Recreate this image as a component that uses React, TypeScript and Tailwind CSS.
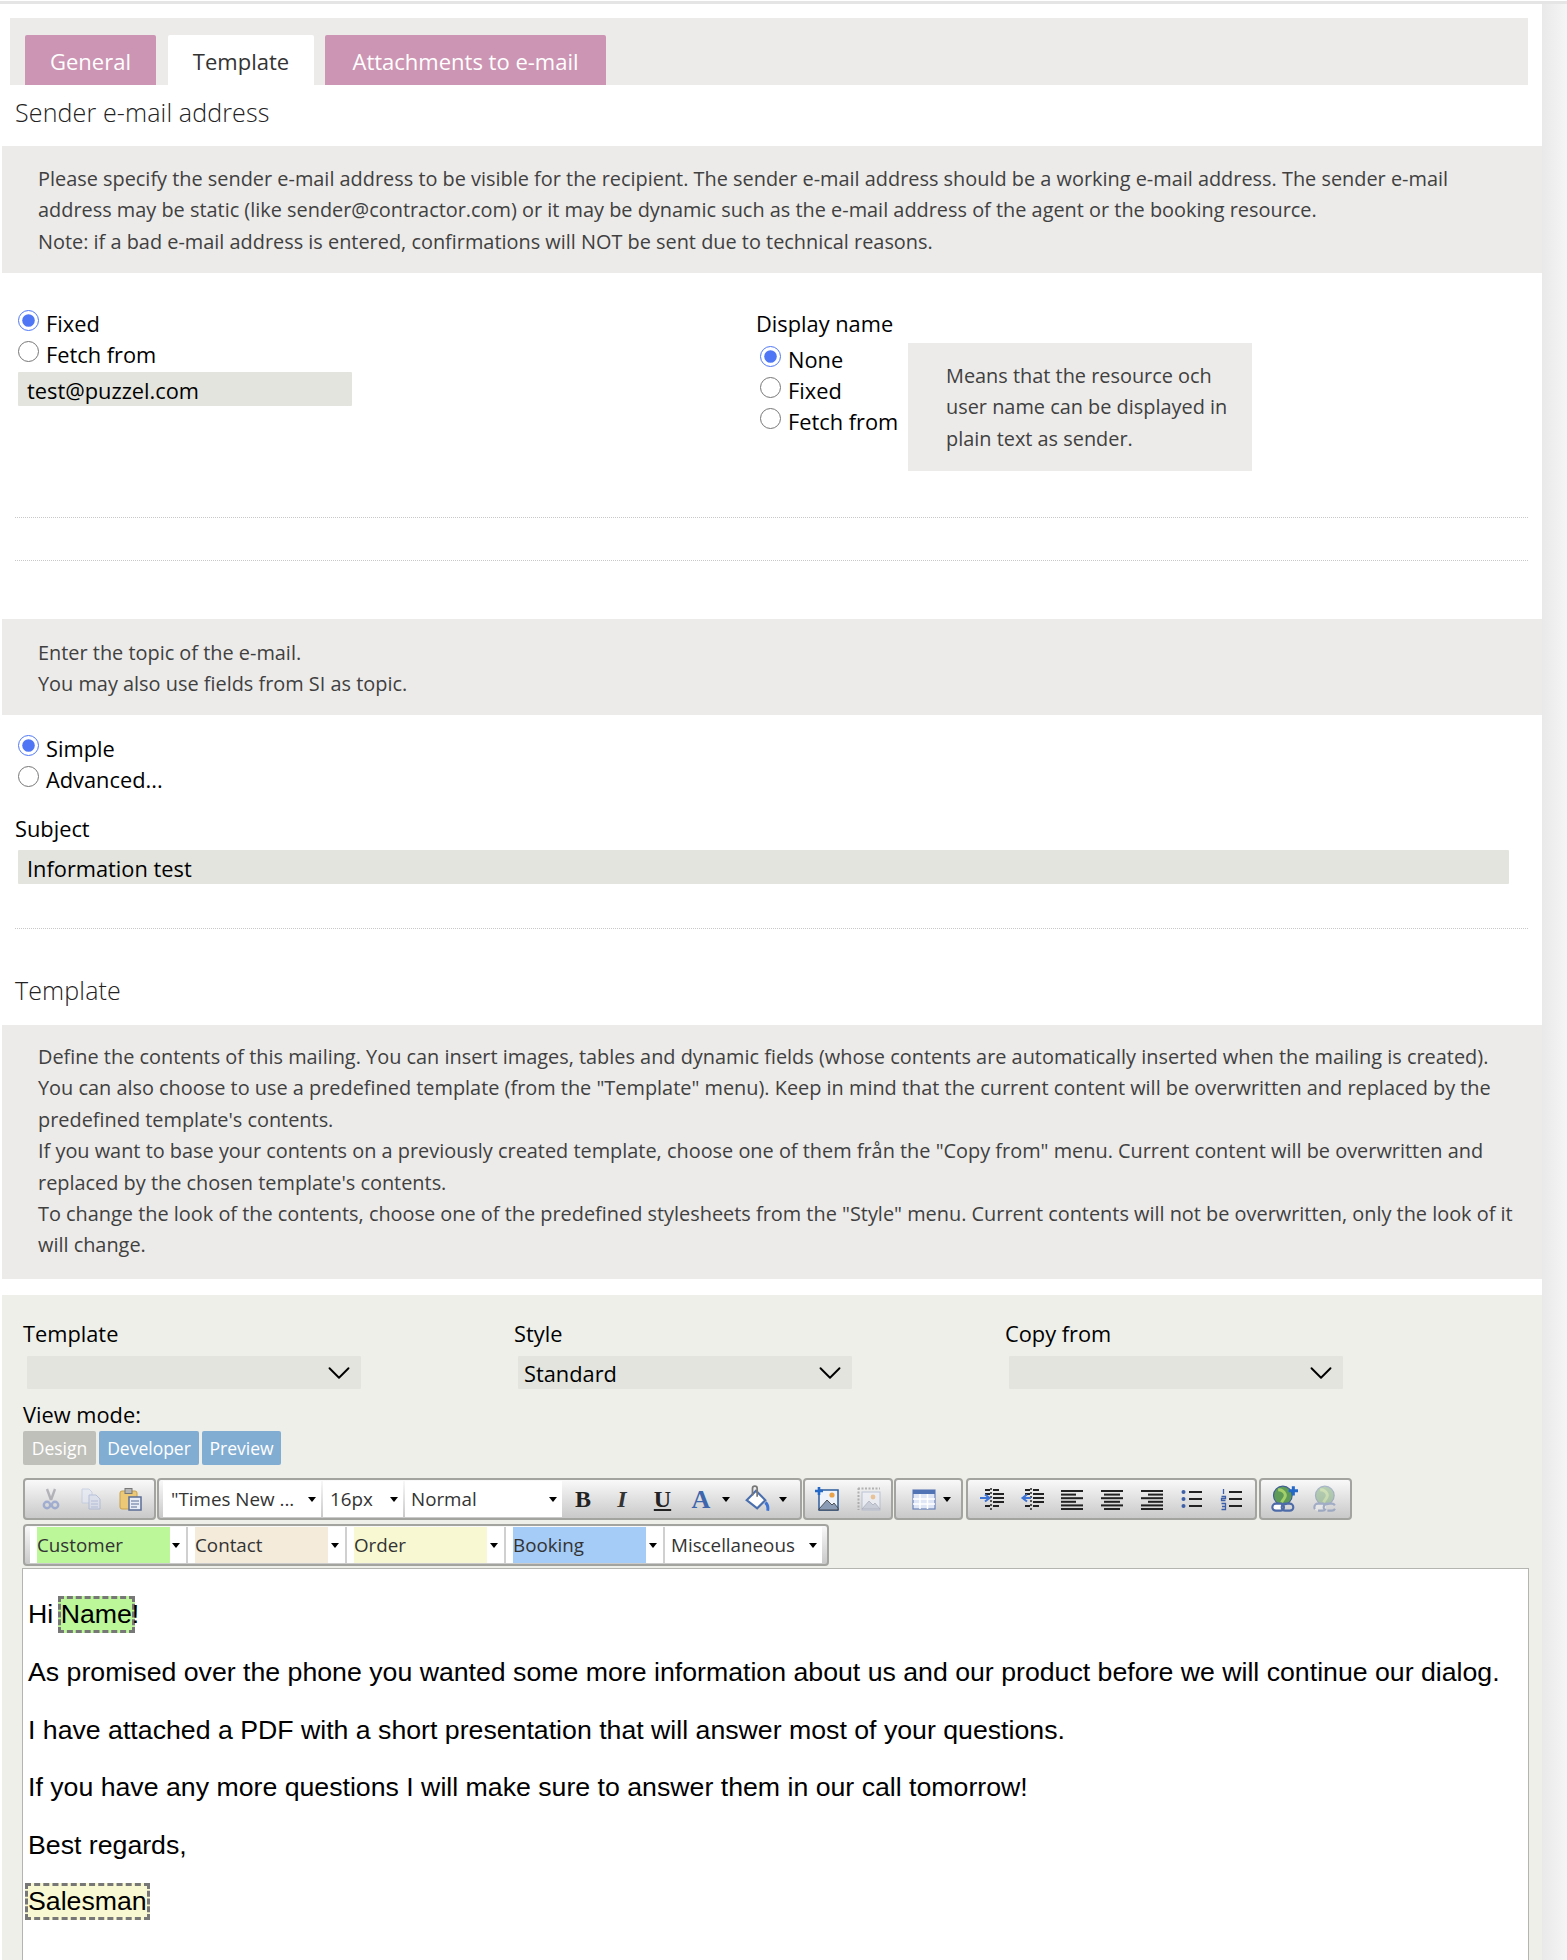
import React from 'react';
import { ChevronDown } from 'lucide-react';

const UI_FONT = "font-['Open_Sans','Noto_Sans',sans-serif]";

const InfoBox = ({ lines, className }: { lines: string[]; className: string }) => (
  <div className={`bg-[#ecebe9] text-[#404040] text-[19.9px] leading-[31.4px] ${className}`}>
    {lines.map((l, i) => (
      <div key={i} className="whitespace-nowrap">{l}</div>
    ))}
  </div>
);

const Radio = ({ label, checked, name }: { label: string; checked?: boolean; name: string }) => (
  <label className="flex items-center h-[31px] text-[21.8px] text-black">
    <input type="radio" name={name} defaultChecked={checked} className="m-0 w-[21px] h-[21px] accent-[#4f77f5] -translate-y-[2px]" />
    <span className="ml-[7px] translate-y-[1.5px]">{label}</span>
  </label>
);

const FakeSelect = ({ value }: { value?: string }) => (
  <div className="w-[334px] h-[33px] ml-[4px] bg-[#e3e4dd] flex items-center justify-between pl-[6px] pr-[3px] text-[21.8px] text-black rounded-[1px]">
    <span className="pt-[2px]">{value}</span>
    <ChevronDown className="w-[38px] h-[38px] -my-[3px]" strokeWidth={1.2} />
  </div>
);

const Caret = () => <span className="w-0 h-0 border-x-[4px] border-x-transparent border-t-[5px] border-t-black" />;

const ToolGroup = ({ className, children }: { className: string; children: React.ReactNode }) => (
  <div className={`h-[42px] shrink-0 flex items-center rounded-[4px] border-2 border-[#a3a3a0] bg-gradient-to-b from-[#f9f9f9] to-[#c9c9c9] ${className}`}>
    {children}
  </div>
);

const ToolSelect = ({ label, width }: { label: string; width: string }) => (
  <div className={`h-[36px] bg-white flex items-center justify-between text-[18.8px] text-[#333] shrink-0 ${width}`}>
    {label}
    <span className="mr-[5px] flex"><Caret /></span>
  </div>
);

const FieldSelect = ({ label, bg, width }: { label: string; bg: string; width: string }) => (
  <div className={`h-[36px] bg-white flex items-center text-[18.8px] text-[#333] shrink-0 border-r-2 border-[#d0d0d0] pl-[7px] pr-[4px] justify-between ${width}`}>
    <span className={`w-[133px] h-full flex items-center ${bg}`}>{label}</span>
    <span className="mr-[2px] flex"><Caret /></span>
  </div>
);

const Icon = ({ children, className = '' }: { children: React.ReactNode; className?: string }) => (
  <svg viewBox="0 0 24 24" className={`w-[24px] h-[24px] shrink-0 ${className}`}>{children}</svg>
);

const CutIcon = () => (
  <Icon className="opacity-60">
    <path d="M8 2l4 11M16 2l-4 11" stroke="#8f8f9a" strokeWidth="2.4" fill="none" />
    <circle cx="8" cy="18" r="3.2" fill="none" stroke="#7b8fca" strokeWidth="2.4" />
    <circle cx="16" cy="18" r="3.2" fill="none" stroke="#7b8fca" strokeWidth="2.4" />
  </Icon>
);
const CopyIcon = () => (
  <Icon className="opacity-60">
    <path d="M3 2h7l3 3v11H3z" fill="#e4e9f5" stroke="#b6c2e0" />
    <path d="M10 8h7l4 4v10H10z" fill="#d8dff0" stroke="#9aa9d2" />
    <path d="M12 14h7M12 17h7M12 20h7" stroke="#9aa9d2" />
  </Icon>
);
const PasteIcon = () => (
  <Icon>
    <rect x="2" y="4" width="17" height="18" rx="2" fill="#edc977" stroke="#c9a14f" />
    <rect x="7" y="1.5" width="7" height="5" fill="#b5b5b5" stroke="#777" />
    <rect x="11" y="10" width="12" height="13" fill="#e8ecf7" stroke="#5b6c96" strokeWidth="1.5" />
    <path d="M13 14h8M13 17h8M13 20h6" stroke="#5b6c96" />
  </Icon>
);
const ImageAddIcon = () => (
  <Icon>
    <rect x="4" y="3" width="19" height="20" fill="#eef3fb" stroke="#2c5d9c" strokeWidth="1.5" />
    <path d="M4 22l8-9 5 5 2-2 4 5v2H4z" fill="#8a9bb5" stroke="#333" strokeWidth="0.8" />
    <circle cx="17" cy="8" r="2.6" fill="#e8a24a" />
    <path d="M4 0v8M0 4h8" stroke="#2468c8" strokeWidth="2.6" />
  </Icon>
);
const ImageIcon = () => (
  <Icon className="opacity-70">
    <path d="M1.5 1v22M1 1.500h22" stroke="#999" strokeWidth="2" strokeDasharray="2 1.500" />
    <rect x="5" y="5" width="18" height="18" fill="#eef1f8" stroke="#aab4cc" />
    <path d="M5 22l7-8 4 4 2-2 5 6z" fill="#c2c9d8" stroke="#98a0b0" strokeWidth="0.8" />
    <circle cx="16" cy="10" r="2.4" fill="#eab57a" />
  </Icon>
);
const TableIcon = () => (
  <Icon>
    <rect x="1" y="3" width="22" height="19" fill="#dfe6f5" stroke="#6a82b8" strokeWidth="1.200" />
    <rect x="1" y="3" width="22" height="4" fill="#4f73b5" />
    <path d="M1 12h22M1 17h22M8 7v15M15.500 7v15" stroke="#fff" strokeWidth="1.500" />
  </Icon>
);
const AlignIcon = ({ rows }: { rows: [number, number][] }) => (
  <Icon>
    {rows.map(([x, w], i) => (
      <rect key={i} x={x} y={3 + i * 3.6} width={w} height="2" fill="#222" />
    ))}
  </Icon>
);
const IndentIcon = ({ flip }: { flip?: boolean }) => (
  <Icon>
    <path d="M11 1v22" stroke="#333" strokeWidth="1.600" strokeDasharray="2 2" />
    <path d="M5 3h5M13 3h6M5 7h5M13 7h11M13 11h11M13 15h11M5 19h5M13 19h6" stroke="#222" strokeWidth="2" />
    {flip ? (
      <path d="M11 11H4M7 7.500L2.500 11 7 14.500" stroke="#3d74d6" strokeWidth="2" fill="none" />
    ) : (
      <path d="M0 11h8M5 7.500L9.500 11 5 14.500" stroke="#3d74d6" strokeWidth="2" fill="none" />
    )}
  </Icon>
);
const BulletIcon = () => (
  <Icon>
    <path d="M9 5h13M9 12h13M9 19h13" stroke="#222" strokeWidth="2" />
    <circle cx="3.500" cy="5" r="2" fill="#3d5fa8" />
    <circle cx="3.500" cy="12" r="2" fill="#3d5fa8" />
    <circle cx="3.500" cy="19" r="2" fill="#3d5fa8" />
  </Icon>
);
const NumberIcon = () => (
  <Icon>
    <path d="M9 5h13M9 12h13M9 19h13" stroke="#222" strokeWidth="2" />
    <path d="M3.500 2v5M1.500 9.500h4v2h-4v2h4M1.500 16.500h4v6h-4M2 19.500h3" stroke="#3d5fa8" strokeWidth="1.300" fill="none" />
  </Icon>
);
const LinkIcon = ({ off }: { off?: boolean }) => (
  <Icon className={`w-[28px] h-[28px] ${off ? 'opacity-40' : ''}`}>
    <circle cx="11" cy="9" r="8" fill="#5f9b58" stroke="#3f5f8f" />
    <path d="M7 4c3 0 5 1 6 4s-2 4-3 7" fill="none" stroke="#a4d06a" strokeWidth="2.500" />
    <rect x="2" y="16" width="10" height="6" rx="3" fill="#fff" stroke="#4d6ba8" strokeWidth="1.800" strokeDasharray={off ? '7 3' : undefined} />
    <rect x="10" y="16" width="10" height="6" rx="3" fill="none" stroke="#4d6ba8" strokeWidth="1.800" strokeDasharray={off ? '7 3' : undefined} />
    {!off && <path d="M20 1v8M16 5h8" stroke="#2468c8" strokeWidth="2.600" />}
  </Icon>
);

const Field = ({ bg, children, className = '' }: { bg?: string; children: React.ReactNode; className?: string }) => (
  <span className={`inline-block border-[3px] border-dashed border-[#777] ${bg} ${className}`}>{children}</span>
);

export default function App() {
  return (
    <div className={`${UI_FONT} w-[1567px] h-[1960px] overflow-hidden bg-white flex flex-col`}>
      <div className="h-[3px] bg-[#e5e5e5] mt-[1px] shrink-0" />
      <div className="flex flex-1 min-h-0">
        <div className="w-[1542px] shrink-0">
          {/* Tabs */}
          <div className="ml-[10px] w-[1518px] h-[67px] mt-[14px] bg-[#ecebe9] flex items-end pl-[15px] text-[22px]">
            <div className="w-[131px] h-[50px] pt-[2px] flex items-center justify-center rounded-t-[2px] bg-[#cc95b3] text-white">General</div>
            <div className="w-[146px] h-[50px] pt-[2px] ml-[12px] flex items-center justify-center rounded-t-[2px] bg-white text-[#333]">Template</div>
            <div className="w-[281px] h-[50px] pt-[2px] ml-[11px] flex items-center justify-center rounded-t-[2px] bg-[#cc95b3] text-white">Attachments to e-mail</div>
          </div>

          <h2 className="ml-[15px] h-[61px] pt-[9px] text-[25px] tracking-[0.14px] font-light text-[#222]">Sender e-mail address</h2>

          <InfoBox
            className="ml-[2px] h-[127px] pt-[17px] pl-[36px]"
            lines={[
              'Please specify the sender e-mail address to be visible for the recipient. The sender e-mail address should be a working e-mail address. The sender e-mail',
              'address may be static (like sender@contractor.com) or it may be dynamic such as the e-mail address of the agent or the booking resource.',
              'Note: if a bad e-mail address is entered, confirmations will NOT be sent due to technical reasons.',
            ]}
          />

          {/* Sender options */}
          <div className="h-[244px] flex relative">
            <div className="w-[756px] pl-[18px] pt-[34px] shrink-0">
              <Radio name="sender" label="Fixed" checked />
              <Radio name="sender" label="Fetch from" />
              <div className="w-[334px] h-[34px] mt-[3px] pt-[4px] bg-[#e3e4dd] flex items-center pl-[9px] text-[21.8px] text-black rounded-[1px]">test@puzzel.com</div>
            </div>
            <div className="pt-[35px] w-[152px] shrink-0">
              <div className="h-[31px] text-[21.8px] leading-[31px] text-black">Display name</div>
              <div className="ml-[4px] mt-[4px]">
                <Radio name="display" label="None" checked />
                <Radio name="display" label="Fixed" />
                <Radio name="display" label="Fetch from" />
              </div>
            </div>
            <InfoBox
              className="w-[344px] h-[128px] mt-[70px] pt-[17px] pl-[38px]"
              lines={['Means that the resource och', 'user name can be displayed in', 'plain text as sender.']}
            />
          </div>
          <div className="ml-[15px] w-[1513px] border-t border-dotted border-[#c8c8c8]" />
          <div className="h-[42px]" />
          <div className="ml-[15px] w-[1513px] border-t border-dotted border-[#c8c8c8]" />
          <div className="h-[58px]" />

          <InfoBox
            className="ml-[2px] h-[96px] pt-[18px] pl-[36px]"
            lines={['Enter the topic of the e-mail.', 'You may also use fields from SI as topic.']}
          />

          <div className="pl-[18px] pt-[17px]">
            <Radio name="subject" label="Simple" checked />
            <Radio name="subject" label="Advanced..." />
          </div>
          <div className="ml-[15px] mt-[19px] h-[31px] text-[21.8px] leading-[31px] text-black">Subject</div>
          <div className="ml-[18px] mt-[6px] w-[1491px] h-[34px] pt-[4px] bg-[#e3e4dd] flex items-center pl-[9px] text-[21.8px] text-black rounded-[1px]">Information test</div>
          <div className="mt-[44px] ml-[15px] w-[1513px] border-t border-dotted border-[#c8c8c8]" />

          <h2 className="ml-[15px] h-[96px] pt-[43px] text-[25px] tracking-[0.14px] font-light text-[#222]">Template</h2>

          <InfoBox
            className="ml-[2px] h-[254px] pt-[16px] pl-[36px]"
            lines={[
              'Define the contents of this mailing. You can insert images, tables and dynamic fields (whose contents are automatically inserted when the mailing is created).',
              'You can also choose to use a predefined template (from the "Template" menu). Keep in mind that the current content will be overwritten and replaced by the',
              "predefined template's contents.",
              'If you want to base your contents on a previously created template, choose one of them från the "Copy from" menu. Current content will be overwritten and',
              "replaced by the chosen template's contents.",
              'To change the look of the contents, choose one of the predefined stylesheets from the "Style" menu. Current contents will not be overwritten, only the look of it',
              'will change.',
            ]}
          />

          {/* Editor panel */}
          <div className="ml-[2px] mt-[16px] h-[700px] bg-[#eeefe9] pl-[21px] pt-[23px]">
            <div className="flex text-[21.8px] leading-[31px] text-black">
              <div className="w-[491px]">
                Template
                <div className="mt-[7px]"><FakeSelect /></div>
              </div>
              <div className="w-[491px]">
                Style
                <div className="mt-[7px]"><FakeSelect value="Standard" /></div>
              </div>
              <div>
                Copy from
                <div className="mt-[7px]"><FakeSelect /></div>
              </div>
            </div>
            <div className="mt-[9px] h-[33px] text-[21.8px] leading-[33px] text-black">View mode:</div>
            <div className="flex gap-[3px] text-[17.5px] text-white">
              <div className="w-[73px] h-[34px] flex items-center justify-center rounded-[2px] bg-[#c0c0ba]">Design</div>
              <div className="w-[100px] h-[34px] flex items-center justify-center rounded-[2px] bg-[#82add3]">Developer</div>
              <div className="w-[79px] h-[34px] flex items-center justify-center rounded-[2px] bg-[#82add3]">Preview</div>
            </div>

            {/* Toolbar */}
            <div className="mt-[13px] flex gap-[1px]">
              <ToolGroup className="w-[133px] justify-between pl-[14px] pr-[12px]">
                <CutIcon />
                <CopyIcon />
                <PasteIcon />
              </ToolGroup>
              <ToolGroup className="w-[645px] pl-[4px]">
                <ToolSelect label={'"Times New ...'} width="w-[158px] pl-[8px] mr-[2px]" />
                <ToolSelect label="16px" width="w-[80px] pl-[7px] mr-[2px]" />
                <ToolSelect label="Normal" width="w-[157px] pl-[6px]" />
                <span className="w-[42px] text-center font-['Liberation_Serif',serif] font-bold text-[24px] text-[#222]">B</span>
                <span className="w-[36px] text-center font-['Liberation_Serif',serif] font-bold italic text-[24px] text-[#333]">I</span>
                <span className="w-[45px] text-center font-['Liberation_Serif',serif] font-bold underline text-[24px] text-[#222]">U</span>
                <span className="w-[32px] text-center font-['Liberation_Serif',serif] font-bold text-[26px] text-[#3e66ad]">A</span>
                <span className="ml-[5px] w-[16px] flex"><Caret /></span>
                <Icon className="ml-[4px] w-[28px] h-[28px]">
                  <path d="M4 13l8-8 8 8-7 7z" fill="#fff" stroke="#4a6fae" strokeWidth="1.800" />
                  <path d="M9 9V3a2 2 0 0 1 4 0v7" fill="none" stroke="#777" strokeWidth="1.500" />
                  <path d="M20 15a4 6 0 0 1 2 7" fill="none" stroke="#3d74d6" strokeWidth="2.500" />
                </Icon>
                <span className="ml-[9px] flex"><Caret /></span>
              </ToolGroup>
              <ToolGroup className="w-[90px] pl-[10px] gap-[18px]">
                <ImageAddIcon />
                <ImageIcon />
              </ToolGroup>
              <ToolGroup className="w-[69px] pl-[16px] gap-[7px]">
                <TableIcon />
                <Caret />
              </ToolGroup>
              <ToolGroup className="w-[291px] ml-[2px] pl-[12px] gap-[16px]">
                <IndentIcon />
                <IndentIcon flip />
                <AlignIcon rows={[[1, 22], [1, 15], [1, 22], [1, 15], [1, 22], [1, 22]]} />
                <AlignIcon rows={[[1, 22], [4, 16], [1, 22], [4, 16], [1, 22], [4, 16]]} />
                <AlignIcon rows={[[1, 22], [8, 15], [1, 22], [8, 15], [1, 22], [1, 22]]} />
                <BulletIcon />
                <NumberIcon />
              </ToolGroup>
              <ToolGroup className="w-[93px] ml-[1px] pl-[9px] gap-[14px]">
                <LinkIcon />
                <LinkIcon off />
              </ToolGroup>
            </div>
            <div className="mt-[4px] w-[806px]">
              <ToolGroup className="w-[806px] pl-[5px]">
                <FieldSelect label="Customer" bg="bg-[#bcf799]" width="w-[158px]" />
                <FieldSelect label="Contact" bg="bg-[#f4ebda]" width="w-[159px]" />
                <FieldSelect label="Order" bg="bg-[#f8f9d3]" width="w-[159px]" />
                <FieldSelect label="Booking" bg="bg-[#a5cbf7]" width="w-[159px]" />
                <ToolSelect label="Miscellaneous" width="w-[157px] pl-[6px]" />
              </ToolGroup>
            </div>

            {/* Editor body */}
            <div className="mt-[2px] -ml-[1px] w-[1507px] h-[400px] bg-white border border-[#b4b4b0] pl-[5px] pt-[27px] font-['Liberation_Sans',Arial,sans-serif] text-[26.7px] leading-[31px] text-black">
              <p className="whitespace-nowrap">Hi <Field bg="bg-[#bcf799]" className="-mx-[3px]">Name</Field>!</p>
              <p className="mt-[24px] whitespace-nowrap">As promised over the phone you wanted some more information about us and our product before we will continue our dialog.</p>
              <p className="mt-[27px] whitespace-nowrap">I have attached a PDF with a short presentation that will answer most of your questions.</p>
              <p className="mt-[26px] whitespace-nowrap">If you have any more questions I will make sure to answer them in our call tomorrow!</p>
              <p className="mt-[27px] whitespace-nowrap">Best regards,</p>
              <p className="mt-[22px] -ml-[3px] whitespace-nowrap"><Field bg="bg-[#f8f9d3]">Salesman</Field></p>
            </div>
          </div>
        </div>
        <div className="flex-1 bg-gradient-to-r from-[#e9e9e9] to-[#f5f5f5]" />
      </div>
    </div>
  );
}
